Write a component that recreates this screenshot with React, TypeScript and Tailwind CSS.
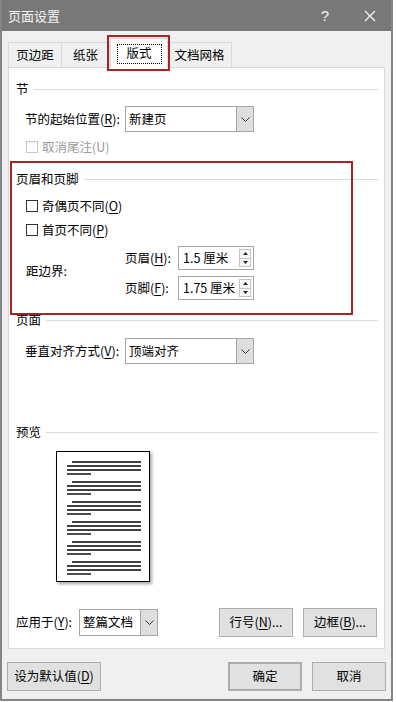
import React from "react";

const F = "font-['Noto_Sans_CJK_SC','Microsoft_YaHei',sans-serif]";

function K({ c }: { c: string }) {
  return <span className="underline underline-offset-2 decoration-1">{c}</span>;
}

function Chevron() {
  return (
    <svg width="9" height="5" viewBox="0 0 9 5">
      <polyline points="0.5,0.5 4.5,4.5 8.5,0.5" fill="none" stroke="#333" strokeWidth="1" />
    </svg>
  );
}

function Combo({ value, className }: { value: string; className: string }) {
  return (
    <div className={`flex border border-[#a6a6a6] bg-white ${className}`}>
      <div className="flex-1 flex items-center pl-[3px]">{value}</div>
      <div className="w-[17px] flex items-center justify-center bg-[#dedede] border-l border-[#a6a6a6]">
        <Chevron />
      </div>
    </div>
  );
}

function Spin({ value }: { value: string }) {
  return (
    <div className="flex h-[24px] w-[76px] border border-[#a6a6a6] bg-white">
      <div className="flex-1 flex items-center pl-[4px]">{value}</div>
      <div className="flex flex-col w-[12px] my-[2px] mr-[2px]">
        <div className="flex-1 flex items-center justify-center border border-[#c4c4c4] bg-[#f5f5f5]">
          <svg width="5" height="3" viewBox="0 0 5 3">
            <polygon points="2.5,0 5,3 0,3" fill="#222" />
          </svg>
        </div>
        <div className="flex-1 flex items-center justify-center border border-t-0 border-[#c4c4c4] bg-[#f5f5f5]">
          <svg width="5" height="3" viewBox="0 0 5 3">
            <polygon points="0,0 5,0 2.5,3" fill="#222" />
          </svg>
        </div>
      </div>
    </div>
  );
}

function Check({ label, disabled }: { label: React.ReactNode; disabled?: boolean }) {
  return (
    <div className="flex items-center h-[16px] pl-[17px]">
      <div className={`w-[12px] h-[12px] border bg-white ${disabled ? "border-[#c6c6c6]" : "border-[#333]"}`} />
      <span className={`ml-[4px] ${disabled ? "text-[#9a9a9a]" : ""}`}>{label}</span>
    </div>
  );
}

function Header({ title, className }: { title: string; className: string }) {
  return (
    <div className={`flex items-center h-[17px] pl-[7px] pr-[6px] ${className}`}>
      <span>{title}</span>
      <div className="ml-[5px] flex-1 h-px bg-[#dcdcdc]" />
    </div>
  );
}

function Btn({ children, className }: { children: React.ReactNode; className: string }) {
  return (
    <div className={`flex h-[29px] items-center justify-center bg-[#e1e1e1] border border-[#adadad] ${className}`}>
      {children}
    </div>
  );
}

function PreviewPage() {
  const groups = [10, 30, 50, 70, 90, 110];
  return (
    <div className="mt-[10px] ml-[47px] w-[94px] h-[131px] border border-black bg-white shadow-[2px_2px_3px_rgba(0,0,0,0.35)]">
      <svg width="92" height="129" viewBox="0 0 92 129">
        {groups.map((y) => (
          <g key={y} stroke="#000" strokeWidth="1.4">
            <line x1="15" y1={y} x2="84" y2={y} />
            <line x1="10" y1={y + 4} x2="84" y2={y + 4} />
            <line x1="10" y1={y + 8} x2="84" y2={y + 8} />
            <line x1="10" y1={y + 12} x2="34" y2={y + 12} />
          </g>
        ))}
      </svg>
    </div>
  );
}

export default function App() {
  return (
    <div className={`relative w-[396px] h-[702px] bg-white text-[12.5px] leading-none text-black ${F}`}>
      <div className="w-[393px] h-[701px] flex flex-col bg-[#f0f0f0] border-x-2 border-b-2 border-[#858585]">
        {/* Title bar */}
        <div className="h-[31px] shrink-0 bg-[#787878] flex items-center pl-[6px] text-[#f4f4f4] text-[13px]">
          <span>页面设置</span>
          <div className="flex-1" />
          <div className="w-[46px] flex justify-center text-[15px] font-['Liberation_Sans',sans-serif]">?</div>
          <div className="w-[43px] flex justify-center">
            <svg width="12" height="12" viewBox="0 0 12 12">
              <path d="M1 1 L11 11 M11 1 L1 11" stroke="#f4f4f4" strokeWidth="1.3" />
            </svg>
          </div>
        </div>

        {/* Tabs */}
        <div className="h-[36px] shrink-0 flex items-end pl-[6px]">
          <div className="w-[54px] h-[25px] flex items-center justify-center border border-b-0 border-[#d9d9d9]">页边距</div>
          <div className="w-[48px] h-[25px] flex items-center justify-center border border-l-0 border-b-0 border-[#d9d9d9]">纸张</div>
          <div className="relative z-10 -mb-px w-[58px] h-[30px] flex items-center justify-center bg-white border border-b-0 border-[#d9d9d9]">
            <span className="w-[45px] h-[20px] flex items-center justify-center border border-dotted border-black">版式</span>
          </div>
          <div className="w-[64px] h-[25px] flex items-center justify-center border border-l-0 border-b-0 border-[#d9d9d9]">文档网格</div>
        </div>

        {/* Panel */}
        <div className="mx-[6px] h-[582px] shrink-0 flex flex-col border border-[#d9d9d9] bg-white">
          <Header title="节" className="mt-[13px]" />
          <div className="mt-[8px] flex items-center pl-[16px]">
            <span className="w-[100px]">节的起始位置(<K c="R" />):</span>
            <Combo value="新建页" className="w-[129px] h-[26px]" />
          </div>
          <div className="mt-[7px]">
            <Check label="取消尾注(U)" disabled />
          </div>

          <Header title="页眉和页脚" className="mt-[16px]" />
          <div className="mt-[10px]">
            <Check label={<>奇偶页不同(<K c="O" />)</>} />
          </div>
          <div className="mt-[8px]">
            <Check label={<>首页不同(<K c="P" />)</>} />
          </div>
          <div className="mt-[8px] flex pl-[17px]">
            <div className="w-[99px] flex items-center pb-[3px]">距边界:</div>
            <div className="flex flex-col gap-[6px]">
              <div className="flex items-center">
                <span className="w-[53px]">页眉(<K c="H" />):</span>
                <Spin value="1.5 厘米" />
              </div>
              <div className="flex items-center">
                <span className="w-[53px]">页脚(<K c="F" />):</span>
                <Spin value="1.75 厘米" />
              </div>
            </div>
          </div>

          <Header title="页面" className="mt-[12px]" />
          <div className="mt-[9px] flex items-center pl-[16px]">
            <span className="w-[100px]">垂直对齐方式(<K c="V" />):</span>
            <Combo value="顶端对齐" className="w-[129px] h-[26px]" />
          </div>

          <Header title="预览" className="mt-[60px]" />
          <PreviewPage />

          <div className="mt-[26px] h-[29px] flex items-center pl-[7px] pr-[7px]">
            <span className="w-[63px]">应用于(<K c="Y" />):</span>
            <Combo value="整篇文档" className="w-[79px] h-[27px]" />
            <Btn className="ml-auto w-[74px]">行号(<K c="N" />)...</Btn>
            <Btn className="ml-[10px] w-[74px]">边框(<K c="B" />)...</Btn>
          </div>
        </div>

        {/* Dialog buttons */}
        <div className="mt-[13px] flex px-[5px]">
          <Btn className="w-[94px]">设为默认值(<K c="D" />)</Btn>
          <div className="flex-1" />
          <Btn className="w-[74px] border-2 border-[#2a6e9c]">确定</Btn>
          <Btn className="ml-[10px] w-[74px]">取消</Btn>
        </div>
      </div>

      {/* Red highlight boxes */}
      <div className="absolute left-[107px] top-[35px] w-[63px] h-[36px] border-2 border-[#a82424] z-20" />
      <div className="absolute left-[10px] top-[161px] w-[343px] h-[154px] border-2 border-[#a82424] z-20" />
    </div>
  );
}
